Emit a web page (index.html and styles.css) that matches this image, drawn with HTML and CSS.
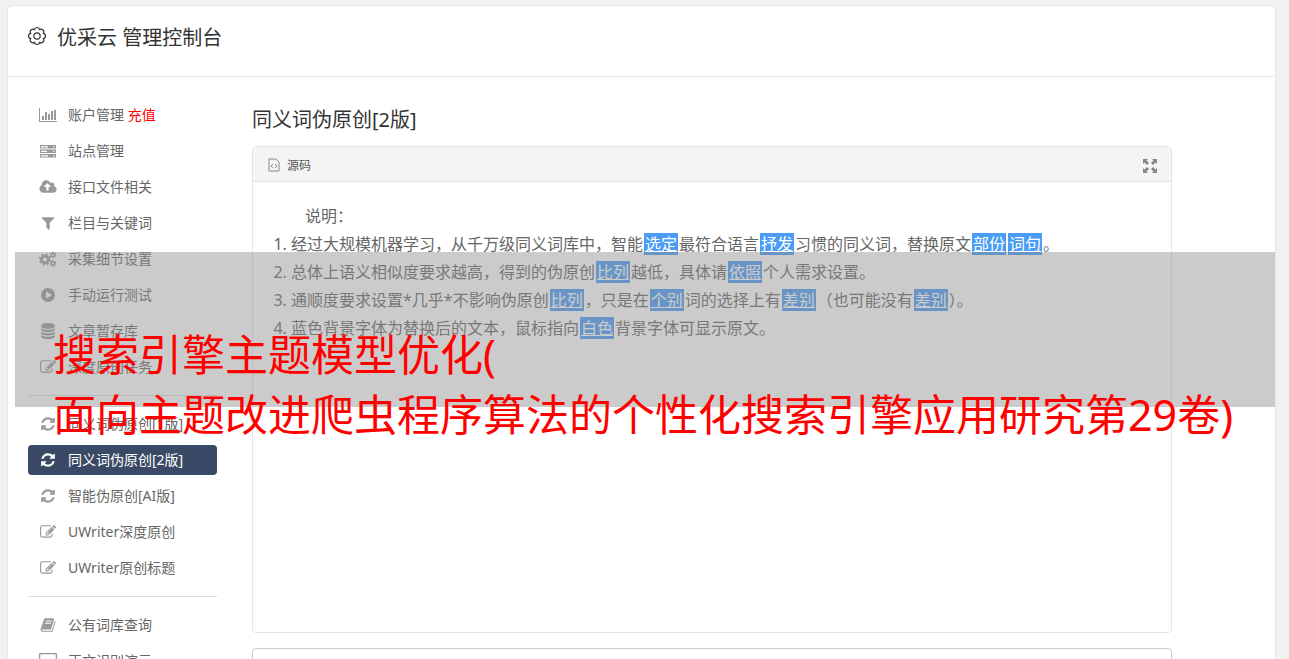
FILE: index.html
```html
<!doctype html>
<html lang="zh-CN">

<head>
    <meta charset="UTF-8">
    <title>优采云 管理控制台</title>
    <link rel="stylesheet" href="styles.css">
</head>

<body>
    <svg class="sprite" aria-hidden="true">
        <symbol id="i-edit" viewBox="0 0 1792 1792"><path d="M888 1184l116-116-152-152-116 116v56h96v96h56zm440-720q-16-16-33 1l-350 350q-17 17-1 33t33-1l350-350q17-17 1-33zm80 594v190q0 119-84.500 203.500t-203.500 84.500h-832q-119 0-203.500-84.500t-84.500-203.500v-832q0-119 84.500-203.500t203.500-84.500h832q63 0 117 25 15 7 18 23 3 17-9 29l-49 49q-14 14-32 8-23-6-45-6h-832q-66 0-113 47t-47 113v832q0 66 47 113t113 47h832q66 0 113-47t47-113v-126q0-13 9-22l64-64q15-15 35-7t20 29zm-96-738l288 288-672 672h-288v-288zm444 132l-92 92-288-288 92-92q28-28 68-28t68 28l152 152q28 28 28 68t-28 68z"/></symbol>
        <symbol id="i-refresh" viewBox="-128 -128 1792 1792"><path d="M1511 928q0 5-1 7-64 268-268 434.500t-478 166.500q-146 0-282.500-55t-243.500-157l-129 129q-19 19-45 19t-45-19-19-45v-448q0-26 19-45t45-19h448q26 0 45 19t19 45-19 45l-137 137q71 66 161 102t187 36q134 0 250-65t186-179q11-17 53-117 8-23 30-23h192q13 0 22.500 9.500t9.500 22.500zm25-800v448q0 26-19 45t-45 19h-448q-26 0-45-19t-19-45 19-45l138-138q-148-137-349-137-134 0-250 65t-186 179q-11 17-53 117-8 23-30 23h-199q-13 0-22.500-9.500t-9.500-22.500v-7q65-268 270-434.500t480-166.500q146 0 284 55.500t245 156.500l130-129q19-19 45-19t45 19 19 45z"/></symbol>
    </svg>

    <div class="page">
        <header class="topbar">
            <svg class="gear" viewBox="0 0 18 18"><path d="M15.370 11.640A2.700 2.700 0 0 1 11.640 15.370A2.700 2.700 0 0 1 6.360 15.370A2.700 2.700 0 0 1 2.630 11.640A2.700 2.700 0 0 1 2.630 6.360A2.700 2.700 0 0 1 6.360 2.630A2.700 2.700 0 0 1 11.640 2.630A2.700 2.700 0 0 1 15.370 6.360A2.700 2.700 0 0 1 15.370 11.640Z"/><circle cx="9" cy="9" r="3.200"/></svg>
            <h1>优采云 管理控制台</h1>
        </header>

        <div class="columns">
            <nav class="sidebar">
                <ul>
                    <li><a href="#"><svg class="icon" viewBox="0 0 18 16"><path d="M0 1h1v13h17v1H0zM3 9h2v4H3zM6 5h2v8H6zM9 7h2v6H9zM12 4h2v9h-2zM15 3h2v10h-2z"/></svg>账户管理 <span class="pay">充值</span></a></li>
                    <li><a href="#"><svg class="icon" viewBox="0 0 18 16"><path fill-rule="evenodd" d="M1 2h16v3.500H1zM2 3.200v1.200h7V3.200zM14 3.200v1h1.500v-1zM1 6.500h16V10H1zM2 7.700v1.200h6V7.700zM14 7.700v1h1.500v-1zM1 11h16v3.500H1zM2 12.200v1.200h7v-1.200zM14 12.200v1h1.500v-1z"/></svg>站点管理</a></li>
                    <li><a href="#"><svg class="icon" viewBox="-64 0 1920 1792"><path d="M1216 864q0-14-9-23l-352-352q-9-9-23-9t-23 9l-351 351q-10 12-10 24 0 14 9 23t23 9h224v352q0 13 9.500 22.500t22.500 9.500h192q13 0 22.500-9.500t9.500-22.500v-352h224q13 0 22.500-9.500t9.500-22.500zm640 288q0 159-112.500 271.500t-271.500 112.500h-1088q-185 0-316.500-131.500t-131.500-316.500q0-130 70-240t188-165q-2-30-2-43 0-212 150-362t362-150q156 0 285.500 87t188.500 231q71-62 166-62 106 0 181 75t75 181q0 76-41 138 130 31 213.500 135.500t83.500 238.500z"/></svg>接口文件相关</a></li>
                    <li><a href="#"><svg class="icon" viewBox="0 0 1792 1792"><path d="M1595 295q17 41-14 70l-493 493v742q0 42-39 59-13 5-25 5-27 0-45-19l-256-256q-19-19-19-45v-486l-493-493q-31-29-14-70 17-39 59-39h1280q42 0 59 39z"/></svg>栏目与关键词</a></li>
                    <li><a href="#"><svg class="icon line" viewBox="0 0 18 16"><circle cx="6" cy="8.500" r="3.400" stroke-width="2.600"/><circle cx="6" cy="8.500" r="5.100" stroke-width="1.800" stroke-dasharray="2 2"/><circle cx="14" cy="4" r="1.700" stroke-width="1.400"/><circle cx="14" cy="4" r="2.800" stroke-width="1.200" stroke-dasharray="1.470 1.460"/><circle cx="14" cy="12.500" r="1.700" stroke-width="1.400"/><circle cx="14" cy="12.500" r="2.800" stroke-width="1.200" stroke-dasharray="1.470 1.460"/></svg>采集细节设置</a></li>
                    <li><a href="#"><svg class="icon" viewBox="0 0 18 16"><path fill-rule="evenodd" d="M9 1a7 7 0 1 1 0 14a7 7 0 1 1 0-14zM7 4.500v7l6-3.500z"/></svg>手动运行测试</a></li>
                    <li><a href="#"><svg class="icon" viewBox="0 0 1792 1792"><path d="M896 768q237 0 443-43t325-127v170q0 69-103 128t-280 93.500-385 34.500-385-34.500-280-93.500-103-128v-170q119 84 325 127t443 43zm0 768q237 0 443-43t325-127v170q0 69-103 128t-280 93.500-385 34.500-385-34.500-280-93.500-103-128v-170q119 84 325 127t443 43zm0-384q237 0 443-43t325-127v170q0 69-103 128t-280 93.500-385 34.500-385-34.500-280-93.500-103-128v-170q119 84 325 127t443 43zm0-1152q208 0 385 34.500t280 93.500 103 128v128q0 69-103 128t-280 93.500-385 34.500-385-34.500-280-93.500-103-128v-128q0-69 103-128t280-93.500 385-34.500z"/></svg>文章暂存库</a></li>
                    <li><a href="#"><svg class="icon"><use href="#i-edit"/></svg>深度原创任务</a></li>
                </ul>
                <hr>
                <ul>
                    <li><a href="#"><svg class="icon"><use href="#i-refresh"/></svg>同义词伪原创[1版]</a></li>
                    <li><a href="#" class="active"><svg class="icon"><use href="#i-refresh"/></svg>同义词伪原创[2版]</a></li>
                    <li><a href="#"><svg class="icon"><use href="#i-refresh"/></svg>智能伪原创[AI版]</a></li>
                    <li><a href="#"><svg class="icon"><use href="#i-edit"/></svg>UWriter深度原创</a></li>
                    <li><a href="#"><svg class="icon"><use href="#i-edit"/></svg>UWriter原创标题</a></li>
                </ul>
                <hr>
                <ul>
                    <li><a href="#"><svg class="icon" viewBox="0 0 1792 1792"><path d="M1703 478q40 57 18 129l-275 906q-19 64-76.500 107.500t-122.500 43.500h-923q-77 0-148.500-53.500t-99.500-131.500q-24-67-2-127 0-4 3-27t4-37q1-8-3-21.500t-3-19.500q2-11 8-21t16.500-23.500 16.500-23.500q23-38 45-91.500t30-91.500q3-10 .5-30t-.5-28q3-11 17-28t17-23q21-36 42-92t25-90q1-9-2.500-32t.5-28q4-13 22-30.500t22-22.500q19-26 42.500-84.500t27.500-96.500q1-8-3-25.500t-2-26.500q2-8 9-18t18-23 17-21q8-12 16.500-30.500t15-35 16-36 19.500-32 26.500-23.500 36-11.500 47.500 5.500l-1 3q38-9 51-9h761q74 0 114 56t18 130l-274 906q-36 119-71.500 153.500t-128.500 34.500h-869q-27 0-38 15-11 16-1 43 24 70 144 70h923q29 0 56-15.500t35-41.500l300-987q7-22 5-57 38 15 59 43zm-1064 2q-4 13 2 22.500t20 9.500h608q13 0 25.500-9.500t16.500-22.500l21-64q4-13-2-22.500t-20-9.500h-608q-13 0-25.500 9.500t-16.500 22.500zm-83 256q-4 13 2 22.500t20 9.500h608q13 0 25.500-9.500t16.500-22.500l21-64q4-13-2-22.500t-20-9.500h-608q-13 0-25.500 9.500t-16.500 22.500z"/></svg>公有词库查询</a></li>
                    <li><a href="#"><svg class="icon" viewBox="0 0 18 16"><path fill-rule="evenodd" d="M1 0h16q1 0 1 1v11q0 1-1 1h-5v2H6v-2H1q-1 0-1-1V1q0-1 1-1zM1.300 1.300v8.700h15.400V1.300z"/></svg>正文识别演示</a></li>
                </ul>
            </nav>

            <main class="content">
                <h2>同义词伪原创[2版]</h2>
                <section class="editor">
                    <div class="toolbar">
                        <button type="button" class="source"><svg viewBox="0 0 12 14"><path d="M1 1h7l3 3v9H1zM5 6L3 8l2 2M7 6l2 2-2 2"/></svg>源码</button>
                        <button type="button" class="expand" aria-label="全屏"><svg viewBox="0 0 14 14"><path d="M0 0h5L3.500 1.500 6 4 4 6 1.500 3.500 0 5zM14 0v5l-1.500-1.500L10 6 8 4l2.500-2.500L9 0zM0 14V9l1.500 1.500L4 8l2 2-2.500 2.500L5 14zM14 14H9l1.500-1.500L8 10l2-2 2.500 2.500L14 9z"/></svg></button>
                    </div>
                    <div class="text">
                        <p>说明：</p>
                        <ol>
                            <li>经过大规模机器学习，从千万级同义词库中，智能<u>选定</u>最符合语言<u>抒发</u>习惯的同义词，替换原文<u>部份</u><u>词句</u>。</li>
                            <li>总体上语义相似度要求越高，得到的伪原创<u>比列</u>越低，具体请<u>依照</u>个人需求设置。</li>
                            <li>通顺度要求设置*几乎*不影响伪原创<u>比列</u>，只是在<u>个别</u>词的选择上有<u>差别</u>（也可能没有<u>差别</u>）。</li>
                            <li>蓝色背景字体为替换后的文本，鼠标指向<u>白色</u>背景字体可显示原文。</li>
                        </ol>
                    </div>
                </section>
                <textarea class="result" aria-label="结果"></textarea>
            </main>
        </div>
    </div>

    <div class="banner">
        <div class="shade"></div>
        <p>搜索引擎主题模型优化(<br>面向主题改进爬虫程序算法的个性化搜索引擎应用研究第29卷)</p>
    </div>
</body>

</html>
```
FILE: styles.css
```css
* {
    box-sizing: border-box;
}
body {
    margin: 0;
    padding: 5px 13px 0 7px;
    height: 100vh;
    overflow: hidden;
    background-color: #f1f1f1;
    font-family: "Noto Sans", "Noto Sans CJK SC", sans-serif;
    color: #333;
}
h1, h2, p, ul, ol {
    margin: 0;
    padding: 0;
    font-weight: normal;
}
ul {
    list-style: none;
}
.sprite {
    display: none;
}
.page {
    background-color: white;
    border: solid 1px #e5e5e5;
    border-radius: 5px;
}

/** En-tête */
.topbar {
    display: flex;
    gap: 11px;
    height: 71px;
    padding: 16px 20px;
    border-bottom: solid 1px #e5e5e5;
}
.topbar h1 {
    font-size: 20px;
    line-height: 32px;
}
.gear {
    width: 18px;
    height: 28px;
    fill: none;
    stroke: #333;
    stroke-width: 1.2;
}
.columns {
    display: flex;
    gap: 35px;
    padding: 23px 103px 0 20px;
}

/** Menu de gauche */
.sidebar {
    flex: 0 0 189px;
    font-size: 14px;
}
.sidebar ul {
    display: grid;
    gap: 6px;
}
.sidebar a {
    display: flex;
    align-items: center;
    height: 30px;
    padding: 0 11px 2px;
    border-radius: 4px;
    color: #666;
    text-decoration: none;
    white-space: pre;
}
.sidebar .active {
    background-color: #3a4a66;
    color: white;
}
.sidebar hr {
    margin: 13px 0;
    border: 0;
    border-top: solid 1px #ddd;
}
.sidebar .pay {
    color: red;
}
.icon {
    width: 18px;
    height: 16px;
    margin: 2px 11px 0 0;
    fill: #999;
}
.line {
    fill: none;
    stroke: #999;
}
.active .icon {
    fill: white;
}

/** Zone de contenu */
.content {
    flex: 1;
    min-width: 0;
}
.content h2 {
    font-size: 20px;
    line-height: 30px;
    margin: 5px 0 11px;
}
.editor {
    min-height: 487px;
    border: solid 1px #e5e5e5;
    border-radius: 4px;
}
.toolbar {
    display: flex;
    justify-content: space-between;
    align-items: center;
    height: 35px;
    padding: 2px 14px 0 15px;
    background-color: #f4f4f4;
    border-bottom: solid 1px #e5e5e5;
}
.toolbar button {
    display: flex;
    align-items: center;
    gap: 7px;
    padding: 0;
    border: 0;
    background: none;
    font: inherit;
    font-size: 12px;
    color: #555;
}
.source svg {
    width: 12px;
    height: 14px;
    fill: none;
    stroke: #888;
}
.expand svg {
    width: 14px;
    height: 14px;
    margin-top: 2px;
    fill: #888;
}
.text {
    padding: 20px 20px;
    font-size: 16px;
    line-height: 28px;
    color: #666;
}
.text p {
    text-indent: 2em;
}
.text ol {
    padding-left: 18px;
}
.text u {
    margin: 0 1px;
    padding: 0 1px;
    background-color: #4a9cf5;
    color: white;
}
.result {
    display: block;
    width: 100%;
    height: 120px;
    margin-top: 15px;
    border: solid 1px #ccc;
    border-radius: 4px;
    resize: none;
}

/** Bandeau superposé */
.banner {
    position: absolute;
    top: 252px;
    left: 15px;
    right: 14px;
    pointer-events: none;
}
.shade {
    height: 155px;
    background-color: rgba(142, 142, 142, 0.46);
}
.banner p {
    position: absolute;
    top: 73px;
    left: 38px;
    color: red;
    font-size: 43px;
    line-height: 60px;
    white-space: nowrap;
}
```
